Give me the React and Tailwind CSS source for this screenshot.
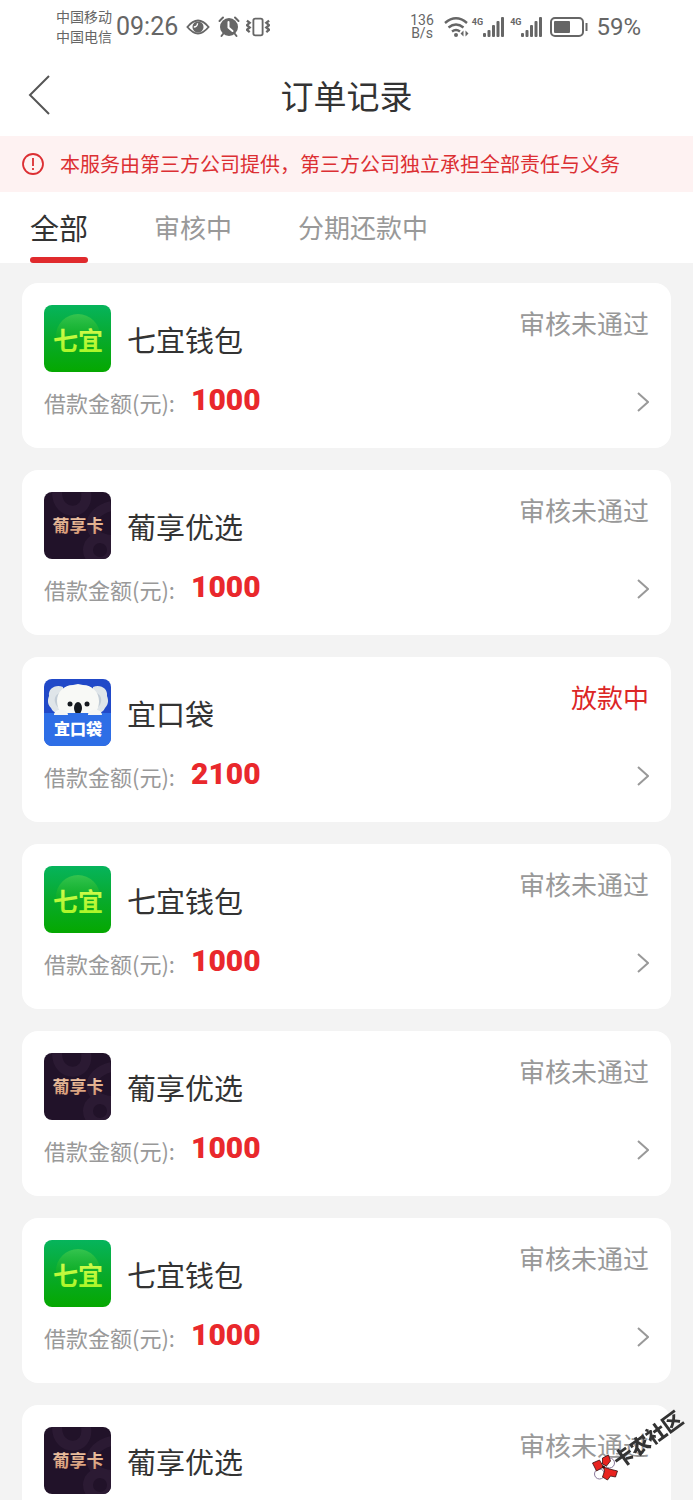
import { useState } from 'react';

const tabs = ['全部', '审核中', '分期还款中'];

const orders = [
    { id: 1, name: '七宜钱包', logo: 'qiyi', status: '审核未通过', amount: 1000 },
    { id: 2, name: '葡享优选', logo: 'puxiang', status: '审核未通过', amount: 1000 },
    { id: 3, name: '宜口袋', logo: 'koudai', status: '放款中', amount: 2100, active: true },
    { id: 4, name: '七宜钱包', logo: 'qiyi', status: '审核未通过', amount: 1000 },
    { id: 5, name: '葡享优选', logo: 'puxiang', status: '审核未通过', amount: 1000 },
    { id: 6, name: '七宜钱包', logo: 'qiyi', status: '审核未通过', amount: 1000 },
    { id: 7, name: '葡享优选', logo: 'puxiang', status: '审核未通过', amount: 1000 },
];

const QiyiLogo = () => (
    <svg viewBox="0 0 67 67" className="size-full">
        <defs>
            <linearGradient id="qiyi-bg" x1="0" y1="0" x2="0" y2="1">
                <stop offset="0" stopColor="#06b45c" />
                <stop offset="0.5" stopColor="#08aa2c" />
                <stop offset="1" stopColor="#05a800" />
            </linearGradient>
            <linearGradient id="qiyi-coin" x1="0" y1="0" x2="0" y2="1">
                <stop offset="0" stopColor="#35c44f" />
                <stop offset="0.6" stopColor="#12ae1c" stopOpacity="0.5" />
                <stop offset="1" stopColor="#05a800" stopOpacity="0" />
            </linearGradient>
            <linearGradient id="qiyi-text" x1="0" y1="0" x2="0" y2="1">
                <stop offset="0" stopColor="#d9fc55" />
                <stop offset="1" stopColor="#a4f522" />
            </linearGradient>
        </defs>
        <rect width="67" height="67" fill="url(#qiyi-bg)" />
        <circle cx="34" cy="31" r="22" fill="url(#qiyi-coin)" />
        <text x="34" y="45" textAnchor="middle" fontSize="25" fontWeight="700" fill="url(#qiyi-text)">七宜</text>
    </svg>
);

const PuxiangLogo = () => (
    <svg viewBox="0 0 67 67" className="size-full">
        <defs>
            <linearGradient id="pux-text" x1="0" y1="0" x2="0" y2="1">
                <stop offset="0" stopColor="#f3cfae" />
                <stop offset="1" stopColor="#d0926e" />
            </linearGradient>
        </defs>
        <rect width="67" height="67" fill="#211229" />
        <g fill="none" stroke="#2b1a33" strokeWidth="10">
            <path d="M13 0C13 26 46 24 42 0" />
            <path d="M67 14C42 20 40 46 67 48" />
            <circle cx="56" cy="58" r="12" />
        </g>
        <text x="34" y="40" textAnchor="middle" fontSize="17" fontWeight="700" fill="url(#pux-text)">葡享卡</text>
    </svg>
);

const KoudaiLogo = () => (
    <svg viewBox="0 0 67 67" className="size-full">
        <rect width="67" height="67" fill="#2149c8" />
        <g fill="#dfe5e9">
            <path d="M19 8C11 5 4 10 5 17c-2 5-1 9 2 12 2 5 7 6 12 4z" />
            <path d="M49 8c8-3 15 2 14 9 2 5 1 9-2 12-2 5-7 6-12 4z" />
        </g>
        <path d="M16 14c-4 1-6 5-5 9s3 6 6 6zM52 14c4 1 6 5 5 9s-3 6-6 6z" fill="#c3cdd6" />
        <path d="M34 5l5 1c9 0 16 7 16 16 0 6-2 9-4 12H17c-2-3-4-7-4-12C13 13 20 6 29 6z" fill="#f8f9f6" />
        <circle cx="26" cy="25" r="2.500" fill="#15191f" />
        <circle cx="43" cy="25" r="2.500" fill="#15191f" />
        <ellipse cx="34" cy="29" rx="4" ry="6" fill="#15191f" />
        <path d="M0 34h67v33H0z" fill="#2e6ee6" />
        <path d="M10 36c0-7 14-7 14 0zM44 36c0-7 14-7 14 0z" fill="#f3f5f5" />
        <text x="34" y="56" textAnchor="middle" fontSize="16" fontWeight="900" fill="#fff">宜口袋</text>
    </svg>
);

const logos = { qiyi: QiyiLogo, puxiang: PuxiangLogo, koudai: KoudaiLogo };

const Signal = () => (
    <div className="flex items-start">
        <span className="text-[9px] leading-[10px] font-bold">4G</span>
        <svg viewBox="0 0 21 20" className="w-[21px] h-5" fill="currentColor">
            <rect x="0" y="16" width="3" height="4" rx="1" />
            <rect x="4.500" y="13" width="3" height="7" rx="1" />
            <rect x="9" y="8" width="3" height="12" rx="1" />
            <rect x="13.500" y="4" width="3" height="16" rx="1" />
            <rect x="18" y="0" width="3" height="20" rx="1" />
        </svg>
    </div>
);

const StatusBar = () => (
    <div className="flex items-center h-[54px] pl-14 pr-[52px] font-[Roboto,'Noto_Sans_CJK_SC',sans-serif] text-[#666]">
        <div className="text-sm leading-5">
            <div>中国移动</div>
            <div>中国电信</div>
        </div>
        <span className="ml-1 text-[25px] leading-8">09:26</span>
        <svg viewBox="0 0 26 18" className="w-6 h-[18px] ml-2" fill="none" stroke="currentColor">
            <path d="M1.500 9Q13-5 24.500 9 13 23 1.500 9z" strokeWidth="2" />
            <circle cx="13" cy="9" r="6" fill="currentColor" stroke="none" />
            <path d="M12.500 5a4 4 0 0 1-4 4" stroke="#fff" strokeWidth="1.500" />
        </svg>
        <svg viewBox="0 0 22 22" className="size-[22px] ml-2" fill="none" stroke="currentColor" strokeLinecap="round">
            <circle cx="11" cy="11" r="9" fill="currentColor" stroke="none" />
            <path d="M1.500 5l3.500-3.500M20.500 5L17 1.500M5 18l-1.500 2M17 18l1.500 2" strokeWidth="2" />
            <path d="M10.500 6v5.500l4 3.500" stroke="#fff" strokeWidth="2" />
        </svg>
        <svg viewBox="0 0 26 22" className="w-6 h-[22px] ml-1.5" fill="none" stroke="currentColor" strokeWidth="2">
            <rect x="8" y="2" width="10" height="18" rx="2" />
            <path d="M1 4l3 2.500-3 2.500 3 2.500-3 2.500 3 2.500M25 4l-3 2.500 3 2.500-3 2.500 3 2.500-3 2.500" strokeWidth="2.500" />
        </svg>
        <div className="flex items-center ml-auto">
            <div className="text-sm leading-[13px] text-center">
                <div>136</div>
                <div>B/s</div>
            </div>
            <svg viewBox="0 0 26 22" className="w-[26px] h-[22px] ml-2.5 mr-0.5" fill="none" stroke="currentColor" strokeWidth="2.400">
                <path d="M1 7q11-9.500 22 0M4.500 11.500q7.500-6 15 0M8 15.500q4-3 8 0" />
                <circle cx="12" cy="19" r="2" fill="currentColor" stroke="none" />
                <path d="M19.500 14.500v6L16.500 17.500zM21.500 14.500v6l3-3z" fill="currentColor" stroke="none" />
            </svg>
            <div className="flex gap-1.5">
                <Signal />
                <Signal />
            </div>
            <svg viewBox="0 0 38 20" className="w-[38px] h-5 ml-2" fill="none" stroke="currentColor" strokeWidth="2">
                <rect x="1" y="1" width="32" height="18" rx="4" />
                <rect x="4" y="4" width="16" height="12" rx="1" fill="currentColor" stroke="none" />
                <path d="M36.500 6v8" />
            </svg>
            <span className="ml-2 text-2xl leading-8">59%</span>
        </div>
    </div>
);

const OrderCard = ({ order }) => {
    const Logo = logos[order.logo];

    return (
        <a href="#" className="block shrink-0 rounded-2xl bg-white px-[22px] pt-[22px] pb-[26px]">
            <div className="flex">
                <div className="size-[67px] shrink-0 overflow-hidden rounded-lg">
                    <Logo />
                </div>
                <h2 className="ml-4 self-center text-[29px] leading-10 text-[#333]">{order.name}</h2>
                <span className={`ml-auto text-[26px] leading-9 ${order.active ? 'text-[#dc2626]' : 'text-[#999]'}`}>
                    {order.status}
                </span>
            </div>
            <div className="flex items-center h-10 mt-2.5">
                <span className="text-[22px] leading-8 text-[#999]">借款金额(元):</span>
                <span className="ml-4 mb-1 font-[Roboto,sans-serif] text-3xl leading-9 font-black text-[#e9282c]">
                    {order.amount}
                </span>
                <svg viewBox="0 0 12 20" className="w-3 h-5 ml-auto" fill="none" stroke="#999" strokeWidth="2">
                    <path d="M1 1l10 9-10 9" />
                </svg>
            </div>
        </a>
    );
};

const Watermark = () => (
    <svg viewBox="0 0 100 84" className="fixed bottom-3 right-1 w-[100px] h-[84px] pointer-events-none">
        <g transform="translate(14.500 63)">
            <circle cx="6" cy="-4" r="5" fill="#fff" stroke="#879" />
            <circle cx="-4" cy="7" r="5" fill="#fff" stroke="#879" />
            <g fill="#e8231f" stroke="#311" strokeWidth="0.800" strokeLinejoin="round">
                <path d="M-11-4l7-3L0 0l-7 4z" />
                <path d="M-1-9l6-3 2 6-4 5-4-2z" />
                <path d="M0 0l6 2 8 2-2 6-5-1-3 4-5-3 2-6z" />
            </g>
            <circle r="1.500" fill="#311" />
        </g>
        <text x="31" y="65" transform="rotate(-36 31 65)" fontSize="20" fontWeight="900" fill="#333">卡农社区</text>
    </svg>
);

const App = () => {
    const [tab, setTab] = useState(tabs[0]);

    return (
        <div className="flex flex-col h-screen overflow-hidden bg-[#f3f3f3] font-['Noto_Sans_CJK_SC',sans-serif]">
            <header className="shrink-0 bg-white">
                <StatusBar />
                <div className="grid grid-cols-[1fr_auto_1fr] items-center h-[82px] px-7">
                    <button type="button" aria-label="返回" className="justify-self-start">
                        <svg viewBox="0 0 22 40" className="w-[22px] h-10" fill="none" stroke="#555" strokeWidth="2">
                            <path d="M21 1L2 20l19 19" />
                        </svg>
                    </button>
                    <h1 className="text-[33px] leading-10 text-[#333]">订单记录</h1>
                </div>
                <div className="flex items-center h-14 px-[22px] bg-[#fef2f2] text-[#dc2f33]">
                    <svg viewBox="0 0 22 22" className="size-[22px] shrink-0" fill="none" stroke="currentColor" strokeWidth="1.800">
                        <circle cx="11" cy="11" r="10" />
                        <path d="M11 5v8M11 15v2" />
                    </svg>
                    <p className="ml-4 text-xl leading-7">本服务由第三方公司提供，第三方公司独立承担全部责任与义务</p>
                </div>
                <nav className="flex gap-[66px] h-[71px] px-[30px]">
                    {tabs.map(t => (
                        <button
                            key={t}
                            type="button"
                            onClick={() => setTab(t)}
                            className={`flex flex-col justify-between ${t === tab ? 'text-[29px] text-[#333]' : 'text-[26px] text-[#999]'}`}
                        >
                            <span className="leading-[70px] h-[65px]">{t}</span>
                            {t === tab && <span className="w-full h-1.5 rounded-full bg-[#e02a2d]" />}
                        </button>
                    ))}
                </nav>
            </header>

            <main className="flex flex-col gap-[22px] flex-1 min-h-0 overflow-y-auto px-[22px] pt-5 [scrollbar-width:none]">
                {orders.map(order => <OrderCard key={order.id} order={order} />)}
            </main>

            <Watermark />
        </div>
    );
};

export default App;
